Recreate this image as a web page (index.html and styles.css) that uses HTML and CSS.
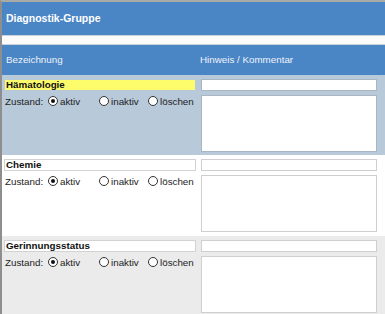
FILE: index.html
```html
<!DOCTYPE html>
<html lang="de">
<head>
    <meta charset="UTF-8">
    <title>Diagnostik-Gruppe</title>
    <link rel="stylesheet" href="styles.css">
</head>
<body>

<div class="page">
    <div class="titel">Diagnostik-Gruppe</div>
    <div class="trenner"></div>
    <div class="kopf">
        <span class="kopf-links">Bezeichnung</span>
        <span>Hinweis / Kommentar</span>
    </div>

    <div class="zeile blau">
        <div class="links">
            <div class="name gelb">Hämatologie</div>
            <div class="zustand">
                <span class="label">Zustand:</span>
                <span class="opt opt1"><span class="radio an"></span>aktiv</span>
                <span class="opt opt2"><span class="radio"></span>inaktiv</span>
                <span class="opt"><span class="radio"></span>löschen</span>
            </div>
        </div>
        <div class="rechts">
            <div class="feld"></div>
            <div class="kommentar"></div>
        </div>
    </div>

    <div class="zeile weiss">
        <div class="links">
            <div class="name">Chemie</div>
            <div class="zustand">
                <span class="label">Zustand:</span>
                <span class="opt opt1"><span class="radio an"></span>aktiv</span>
                <span class="opt opt2"><span class="radio"></span>inaktiv</span>
                <span class="opt"><span class="radio"></span>löschen</span>
            </div>
        </div>
        <div class="rechts">
            <div class="feld"></div>
            <div class="kommentar"></div>
        </div>
    </div>

    <div class="zeile grau">
        <div class="links">
            <div class="name">Gerinnungsstatus</div>
            <div class="zustand">
                <span class="label">Zustand:</span>
                <span class="opt opt1"><span class="radio an"></span>aktiv</span>
                <span class="opt opt2"><span class="radio"></span>inaktiv</span>
                <span class="opt"><span class="radio"></span>löschen</span>
            </div>
        </div>
        <div class="rechts">
            <div class="feld"></div>
            <div class="kommentar"></div>
        </div>
    </div>
</div>

</body>
</html>
```

FILE: styles.css
```css
body {
    font-family: "Liberation Sans", Arial, sans-serif;
    margin: 0;
    padding: 0;
    background-color: #ebebeb;
}
.page {
    width: 385px;
    height: 314px;
    overflow: hidden;
    box-sizing: border-box;
    border-left: 2px solid #8e8e8e;
    border-top: 2px solid #a8aaa8;
}
.titel {
    background-color: #4a86c6;
    color: #fff;
    font-weight: bold;
    font-size: 10.5px;
    height: 33px;
    line-height: 33px;
    padding-left: 4px;
}
.trenner {
    height: 10px;
    box-sizing: border-box;
    background-color: #fbfbfb;
    border-top: 1px solid #c9d3de;
    border-bottom: 1px solid #c9d3de;
}
.kopf {
    background-color: #4a86c6;
    color: #eef3fa;
    font-size: 9.8px;
    height: 30px;
    line-height: 30px;
    padding-left: 4px;
    display: flex;
}
.kopf-links {
    width: 194px;
}
.zeile {
    display: flex;
    padding: 4px 0 3px 2px;
    height: 81px;
    box-sizing: border-box;
}
.blau {
    background-color: #b8c9da;
    height: 80px;
}
.weiss {
    background-color: #fff;
}
.grau {
    background-color: #ebebeb;
}
.links {
    width: 192px;
    margin-right: 5px;
}
.rechts {
    width: 176px;
    display: flex;
    flex-direction: column;
    gap: 4px;
}
.name {
    height: 12px;
    box-sizing: border-box;
    border: 1px solid #d2d2d2;
    background-color: #fff;
    font-weight: bold;
    font-size: 9.8px;
    line-height: 10px;
    padding-left: 1px;
    color: #111;
}
.blau .name {
    border-color: #b8c9da;
}
.gelb {
    background-color: #fdfd6c;
}
.zustand {
    display: flex;
    align-items: center;
    font-size: 9.8px;
    color: #222;
    margin-top: 4px;
    height: 12px;
}
.label {
    width: 43px;
    padding-left: 1px;
}
.opt {
    display: flex;
    align-items: center;
}
.opt1 {
    width: 51px;
}
.opt2 {
    width: 49px;
}
.radio {
    width: 8px;
    height: 8px;
    border: 1px solid #333;
    border-radius: 50%;
    background-color: #fff;
    margin-right: 2px;
    position: relative;
}
.radio.an::after {
    content: "";
    position: absolute;
    left: 2px;
    top: 2px;
    width: 4px;
    height: 4px;
    border-radius: 50%;
    background-color: #111;
}
.feld {
    height: 12px;
    box-sizing: border-box;
    border: 1px solid #cfcfcf;
    background-color: #fff;
}
.kommentar {
    height: 57px;
    box-sizing: border-box;
    border: 1px solid #cfcfcf;
    background-color: #fff;
}
.blau .feld,
.blau .kommentar {
    border-color: #a9b6c4;
}
```
